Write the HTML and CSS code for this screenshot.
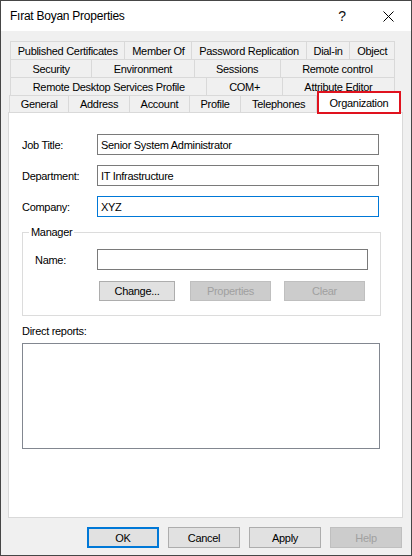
FILE: index.html
```html
<!DOCTYPE html>
<html>
<head>
<meta charset="utf-8">
<link rel="stylesheet" href="styles.css">
</head>
<body>
<div class="window">
  <div class="titlebar">
    <span class="title">Fırat Boyan Properties</span>
    <span class="tb-btn tb-help">?</span>
    <span class="tb-btn"><svg width="11" height="11" viewBox="0 0 11 11"><path d="M0.5 0.5 L10.5 10.5 M10.5 0.5 L0.5 10.5" stroke="#000" stroke-width="1" fill="none"/></svg></span>
  </div>
  <div class="client">
    <div class="tabs">
      <div class="tabrow back">
        <div class="tab">Published Certificates</div>
        <div class="tab">Member Of</div>
        <div class="tab">Password Replication</div>
        <div class="tab">Dial-in</div>
        <div class="tab">Object</div>
      </div>
      <div class="tabrow back">
        <div class="tab">Security</div>
        <div class="tab">Environment</div>
        <div class="tab">Sessions</div>
        <div class="tab">Remote control</div>
      </div>
      <div class="tabrow back">
        <div class="tab">Remote Desktop Services Profile</div>
        <div class="tab">COM+</div>
        <div class="tab">Attribute Editor</div>
      </div>
      <div class="tabrow front">
        <div class="tab">General</div>
        <div class="tab">Address</div>
        <div class="tab">Account</div>
        <div class="tab">Profile</div>
        <div class="tab">Telephones</div>
        <div class="tab selected">Organization</div>
      </div>
    </div>
    <div class="panel">
      <div class="field">
        <span class="lbl">Job Title:</span>
        <div class="input">Senior System Administrator</div>
      </div>
      <div class="field">
        <span class="lbl">Department:</span>
        <div class="input">IT Infrastructure</div>
      </div>
      <div class="field last">
        <span class="lbl">Company:</span>
        <div class="input focus">XYZ</div>
      </div>
      <fieldset class="group">
        <legend>Manager</legend>
        <div class="name-row">
          <span class="lbl-name">Name:</span>
          <div class="input name-input"></div>
        </div>
        <div class="mgr-buttons">
          <div class="btn btn-change">Change...</div>
          <div class="btn btn-wide disabled">Properties</div>
          <div class="btn btn-wide disabled">Clear</div>
        </div>
      </fieldset>
      <div class="dr-label">Direct reports:</div>
      <div class="listbox"></div>
    </div>
    <div class="buttons">
      <div class="btn dlg default">OK</div>
      <div class="btn dlg">Cancel</div>
      <div class="btn dlg">Apply</div>
      <div class="btn dlg disabled">Help</div>
    </div>
  </div>
</div>
</body>
</html>
```

FILE: styles.css
```css
* { box-sizing: border-box; }
body {
  margin: 0;
  font-family: "Liberation Sans", Arial, sans-serif;
  font-size: 11px;
  letter-spacing: -0.3px;
  color: #000;
}
.window {
  width: 412px;
  height: 556px;
  border: 1px solid #464646;
  display: flex;
  flex-direction: column;
  background: #f0f0f0;
}
.titlebar {
  height: 30px;
  flex: none;
  background: #fff;
  display: flex;
  align-items: center;
  padding-left: 9px;
}
.title { flex: 1; font-size: 12px; letter-spacing: -0.25px; }
.tb-btn {
  width: 46px;
  height: 30px;
  display: flex;
  align-items: center;
  justify-content: center;
}
.tb-help { font-size: 14px; color: #111; }
.client {
  flex: 1;
  display: flex;
  flex-direction: column;
  padding: 10px 8px 0 7px;
}
.tabs { display: flex; flex-direction: column; }
.tabrow { display: flex; height: 18px; }
.tabrow.back { margin: 0 8px 0 2px; }
.tabrow.front { height: 17px; margin: 0 5px 0 1px; }
.tab {
  flex: 1 1 auto;
  border: 1px solid #d9d9d9;
  border-bottom: none;
  margin-left: -1px;
  display: flex;
  align-items: center;
  justify-content: center;
  padding: 0 5px;
  white-space: nowrap;
  background: #f0f0f0;
}
.tab:first-child { margin-left: 0; }
.tab.selected {
  position: relative;
  z-index: 1;
  height: 23px;
  margin: -4px -3px 0 0;
  background: #fff;
  border: 2px solid #e0121e;
}
.panel {
  height: 406px;
  flex: none;
  background: #fff;
  border: 1px solid #d9d9d9;
  padding: 21px 0 0 13px;
}
.field {
  display: flex;
  align-items: center;
  height: 21px;
  margin-bottom: 10px;
}
.field.last { margin-bottom: 0; }
.lbl { width: 75px; }
.input {
  width: 282px;
  height: 21px;
  border: 1px solid #7a7a7a;
  background: #fff;
  padding: 0 3px;
  display: flex;
  align-items: center;
}
.input.focus { border-color: #0078d7; }
.group {
  margin: 9px 0 0 0;
  width: 357px;
  border: 1px solid #dcdcdc;
  padding: 11px 12px 14px 12px;
}
.group legend { padding: 0 2px; margin-left: -6px; }
.name-row { display: flex; align-items: center; height: 21px; }
.lbl-name { width: 62px; }
.name-input { width: 271px; }
.mgr-buttons {
  display: flex;
  margin: 11px 0 0 64px;
}
.btn {
  height: 21px;
  border: 1px solid #adadad;
  background: #e1e1e1;
  display: flex;
  align-items: center;
  justify-content: center;
}
.btn-change { width: 76px; height: 20px; }
.btn-wide { width: 81px; height: 20px; }
.mgr-buttons .btn-wide:nth-child(2) { margin-left: 15px; }
.mgr-buttons .btn-wide:nth-child(3) { margin-left: 13px; }
.btn.disabled {
  background: #cccccc;
  border-color: #bfbfbf;
  color: #a0a0a0;
}
.dr-label { margin-top: 9px; height: 13px; }
.listbox {
  margin-top: 5px;
  width: 358px;
  height: 106px;
  border: 1px solid #828790;
  background: #fff;
}
.buttons {
  display: flex;
  justify-content: flex-end;
  gap: 9px;
  margin-top: 9px;
  padding-right: 1px;
}
.btn.dlg { width: 72px; }
.btn.default { border: 2px solid #0078d7; }
```
